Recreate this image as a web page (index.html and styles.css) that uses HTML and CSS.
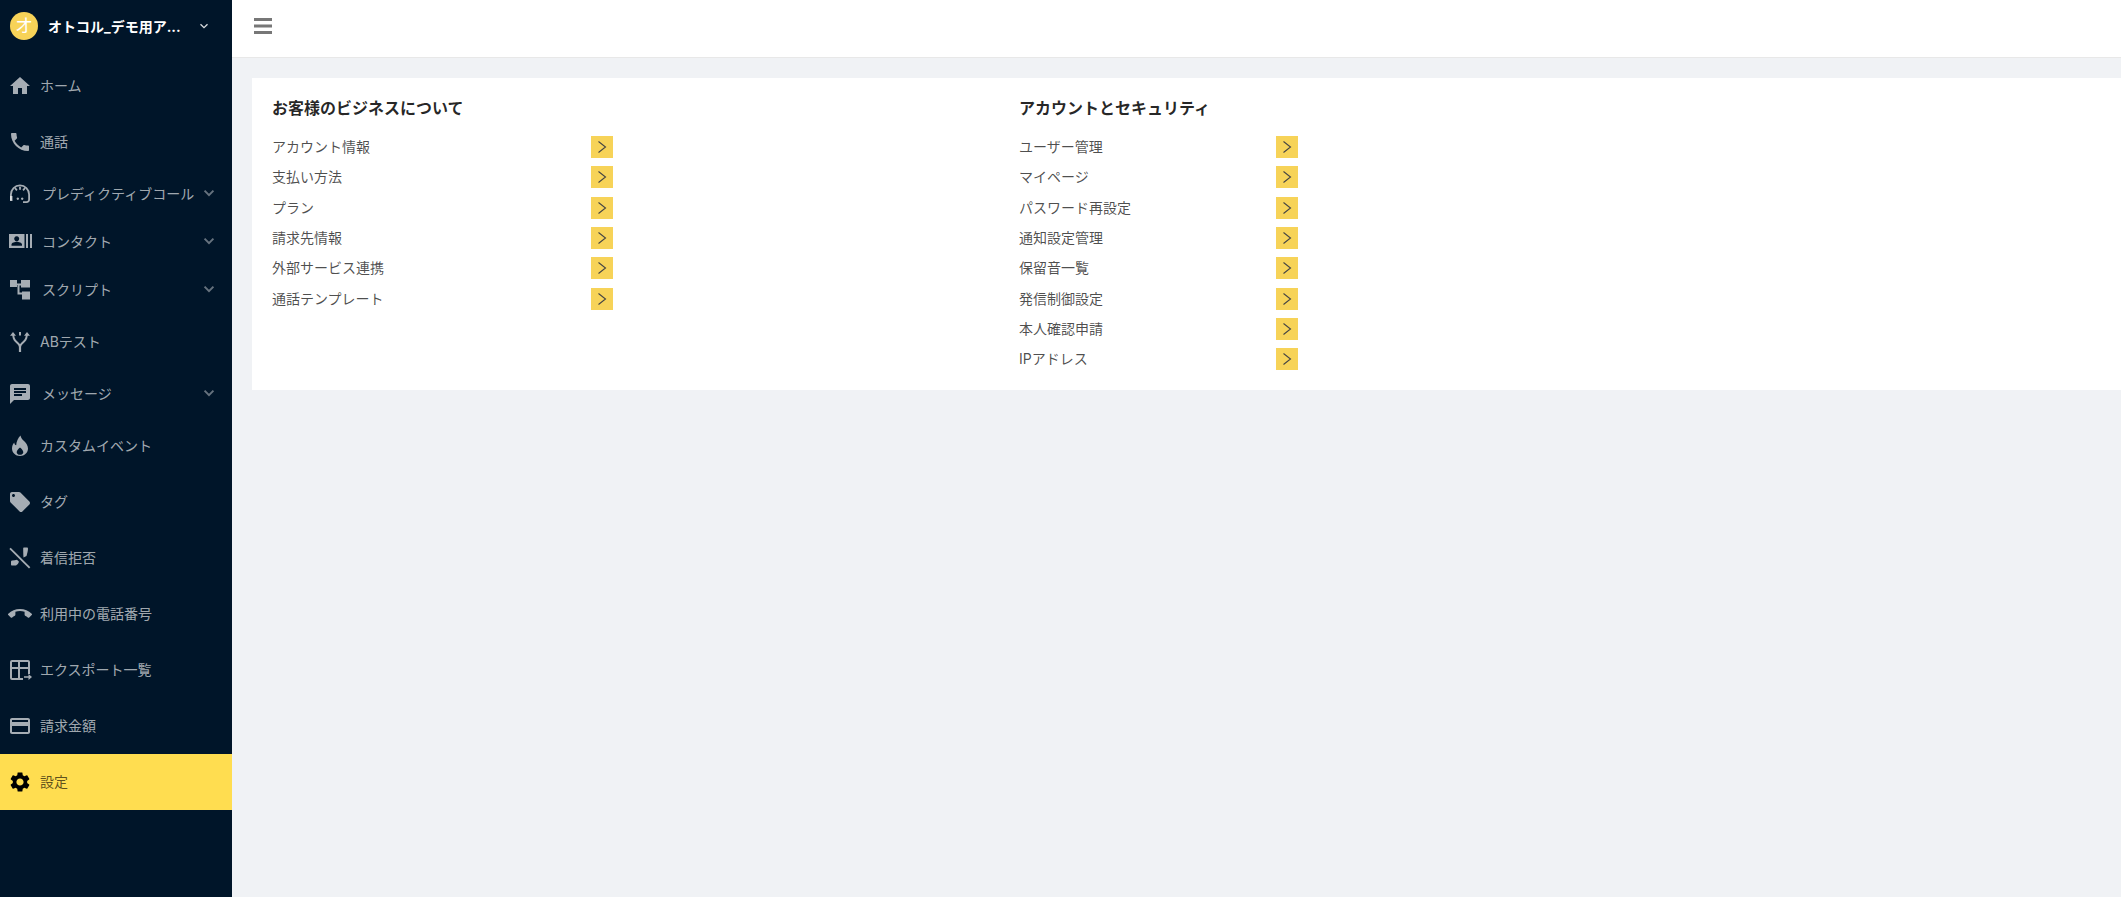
FILE: index.html
```html
<!DOCTYPE html>
<html lang="ja">
<head>
<meta charset="utf-8">
<title>設定</title>
<link rel="stylesheet" href="styles.css">
</head>
<body>
<div class="app">
  <aside class="sider">
    <div class="brand">
      <span class="avatar">オ</span>
      <span class="brand-name">オトコル_デモ用ア...</span>
      <svg class="brand-chev" viewBox="0 0 12 12"><path d="M2.500 4.200L6 7.700l3.500-3.500" /></svg>
    </div>
    <nav class="menu">
      <a class="item"><svg class="ico" viewBox="0 0 24 24"><path d="M10 20v-6h4v6h5v-8h3L12 3 2 12h3v8z"/></svg><span>ホーム</span></a>
      <a class="item"><svg class="ico" viewBox="0 0 24 24"><path d="M6.620 10.790c1.440 2.830 3.760 5.140 6.590 6.590l2.200-2.200c.27-.27.67-.36 1.020-.24 1.120.37 2.330.57 3.570.57.55 0 1 .45 1 1V20c0 .55-.45 1-1 1-9.390 0-17-7.610-17-17 0-.55.45-1 1-1h3.500c.55 0 1 .45 1 1 0 1.250.2 2.450.57 3.570.11.35.03.74-.25 1.020l-2.200 2.200z"/></svg><span>通話</span></a>
      <a class="item sub"><svg class="ico" viewBox="0 0 24 24"><path fill-rule="evenodd" d="M12 2.500a10 10 0 0 1 10 10v5c0 2-1.500 3.500-3.500 3.500H15v-1.800h3.500c1 0 1.700-.7 1.700-1.700v-5a8.200 8.200 0 0 0-16.400 0v6H2v-6a10 10 0 0 1 10-10z"/><path d="M2 14h2.500v5H2zM11.100 4.800h1.800v3h-1.800zM6.400 6.800l1.300-1.200 1.900 2.200-1.300 1.200zM16.300 5.600l1.300 1.200-1.900 2.200-1.300-1.200zM9.800 15.500a1.200 1.200 0 1 0 .01 0zM14.200 15.500a1.200 1.200 0 1 0 .01 0z"/></svg><span>プレディクティブコール</span><svg class="chev" viewBox="0 0 12 12"><path d="M2.200 4l3.800 3.800L9.800 4"/></svg></a>
      <a class="item sub"><svg class="ico" viewBox="0 0 24 24"><path d="M1 4h15.500v14H1zM8.700 6.300a2.500 2.500 0 1 0 .01 0zM3.500 15.800h10.500v-1.200c0-1.800-3.500-2.800-5.200-2.800s-5.300 1-5.300 2.800zM18 4h2v14h-2zM22 4h2v14h-2z" fill-rule="evenodd"/></svg><span>コンタクト</span><svg class="chev" viewBox="0 0 12 12"><path d="M2.200 4l3.800 3.800L9.800 4"/></svg></a>
      <a class="item sub"><svg class="ico" viewBox="0 0 24 24"><path d="M2 2h7v3.500h4V2h9v7.500h-9V7.500h-1.500v7H14v-1h8v8h-8v-5h-4.500v-9.500H9V9H2z"/></svg><span>スクリプト</span><svg class="chev" viewBox="0 0 12 12"><path d="M2.200 4l3.800 3.800L9.800 4"/></svg></a>
      <a class="item"><svg class="ico" viewBox="0 0 24 24"><path d="M5 2l3 3.800H6.200c.3 2.700 1.700 4.500 3.500 6 1 .8 1.700 1.500 2.300 2.400.6-.9 1.300-1.600 2.300-2.400 1.800-1.500 3.200-3.300 3.500-6H16L19 2l3 3.800h-2.300c-.3 3.600-2 5.800-4.100 7.500-1.600 1.300-2.500 2.400-2.500 4V22h-2.200v-4.700c0-1.600-.9-2.700-2.500-4-2.100-1.700-3.800-3.900-4.100-7.500H2z"/><path d="M11 2h2v3.500h-2z"/></svg><span>ABテスト</span></a>
      <a class="item sub"><svg class="ico" viewBox="0 0 24 24"><path d="M20 2H4c-1.100 0-1.990.9-1.990 2L2 22l4-4h14c1.100 0 2-.9 2-2V4c0-1.100-.9-2-2-2zM6 9h12v2H6V9zm8 5H6v-2h8v2zm4-6H6V6h12v2z"/></svg><span>メッセージ</span><svg class="chev" viewBox="0 0 12 12"><path d="M2.200 4l3.800 3.800L9.800 4"/></svg></a>
      <a class="item"><svg class="ico" viewBox="0 0 24 24"><path fill-rule="evenodd" d="M12.500 1.500s.7 2.800 2.700 4.700c2.600 2.400 4.800 5 4.800 8.300 0 4.100-3.600 7.500-8 7.500s-8-3.400-8-7.500c0-2.500 1-4.600 2.200-6 .2 1.600 1 2.500 2 2.800.2-3.800 1.800-7.300 4.300-9.800zM12 13.500c-1.600 1.500-3.300 2.900-3.300 4.700 0 1.500 1.400 2.600 3.300 2.600s3.300-1.100 3.300-2.600c0-1.800-1.700-3.200-3.300-4.700z"/></svg><span>カスタムイベント</span></a>
      <a class="item"><svg class="ico" viewBox="0 0 24 24"><path d="M21.410 11.580l-9-9C12.050 2.220 11.550 2 11 2H4c-1.100 0-2 .9-2 2v7c0 .55.22 1.050.59 1.420l9 9c.36.36.86.58 1.410.58.55 0 1.050-.22 1.410-.59l7-7c.37-.36.59-.86.59-1.410 0-.55-.23-1.060-.59-1.420zM5.500 7C4.670 7 4 6.330 4 5.500S4.670 4 5.500 4 7 4.670 7 5.500 6.330 7 5.500 7z"/></svg><span>タグ</span></a>
      <a class="item"><svg class="ico" viewBox="0 0 24 24"><path d="M2.700 1.700l19.600 19.600-1.300 1.300L1.400 3z"/><path d="M15.500 11.500l3-1.500c.7-2.500 1.500-5.500 1.500-7.300 0-.8-.5-1.200-1-1.200h-2.800c-.7 0-1 .4-1 1 0 2.500 0 5.300.3 9zM3 16c0-1 .5-1.500 1.300-1.500 1.700 0 3.200-.3 4.700-.8l2 2-1 2c-.5.400-1 1.300-2 1.800H4c-.6 0-1-.5-1-1z"/></svg><span>着信拒否</span></a>
      <a class="item"><svg class="ico" viewBox="0 0 24 24"><path d="M12 9c-1.600 0-3.150.25-4.600.72v3.100c0 .39-.23.74-.56.9-.98.49-1.870 1.120-2.660 1.850-.18.18-.43.28-.7.28-.28 0-.53-.11-.71-.29L.29 13.080c-.18-.17-.29-.42-.29-.7 0-.28.11-.53.29-.71C3.340 8.780 7.460 7 12 7s8.660 1.780 11.710 4.670c.18.18.29.43.29.71 0 .28-.11.53-.29.71l-2.480 2.480c-.18.18-.43.29-.71.29-.27 0-.52-.11-.7-.28-.79-.74-1.690-1.360-2.670-1.850-.33-.16-.56-.5-.56-.9v-3.100C15.150 9.250 13.600 9 12 9z"/></svg><span>利用中の電話番号</span></a>
      <a class="item"><svg class="ico" viewBox="0 0 24 24"><path fill-rule="evenodd" d="M4 2h16a2 2 0 0 1 2 2v12h-2v-5h-8v9h3v2H4a2 2 0 0 1-2-2V4a2 2 0 0 1 2-2zM4 4v5h6V4zM12 4v5h8V4zM4 11v9h6v-9z"/><path d="M16 18.200h4.500V16l3.500 3-3.500 3v-2.200H16z"/></svg><span>エクスポート一覧</span></a>
      <a class="item"><svg class="ico" viewBox="0 0 24 24"><path d="M20 4H4c-1.110 0-1.990.89-1.990 2L2 18c0 1.110.89 2 2 2h16c1.110 0 2-.89 2-2V6c0-1.110-.89-2-2-2zm0 14H4v-6h16v6zm0-10H4V6h16v2z"/></svg><span>請求金額</span></a>
      <a class="item active"><svg class="ico" viewBox="0 0 24 24"><path d="M19.140 12.940c.04-.3.06-.61.06-.94 0-.32-.02-.64-.07-.94l2.030-1.580c.18-.14.23-.41.12-.61l-1.920-3.320c-.12-.22-.37-.29-.59-.22l-2.390.96c-.5-.38-1.030-.7-1.620-.94l-.36-2.540c-.04-.24-.24-.41-.48-.41h-3.840c-.24 0-.43.17-.47.41l-.36 2.540c-.59.24-1.130.57-1.620.94l-2.390-.96c-.22-.08-.47 0-.59.22L2.740 8.870c-.12.21-.08.47.12.61l2.030 1.580c-.05.3-.09.63-.09.94s.02.64.07.94l-2.030 1.580c-.18.14-.23.41-.12.61l1.920 3.320c.12.22.37.29.59.22l2.390-.96c.5.38 1.030.7 1.620.94l.36 2.540c.05.24.24.41.48.41h3.840c.24 0 .44-.17.47-.41l.36-2.540c.59-.24 1.130-.56 1.620-.94l2.390.96c.22.08.47 0 .59-.22l1.920-3.320c.12-.22.07-.47-.12-.61l-2.010-1.580zM12 15.600c-1.980 0-3.600-1.620-3.600-3.600s1.620-3.600 3.600-3.600 3.600 1.620 3.600 3.600-1.620 3.600-3.600 3.600z"/></svg><span>設定</span></a>
    </nav>
  </aside>
  <div class="main">
    <header class="topbar">
      <svg class="burger" viewBox="0 0 18 16"><path d="M0 0h18v3H0zM0 6.500h18v3H0zM0 13h18v3H0z"/></svg>
    </header>
    <section class="card">
      <div class="col col-left">
        <h2 class="title">お客様のビジネスについて</h2>
        <div class="row"><span>アカウント情報</span><a class="go"><svg viewBox="0 0 22 22"><path d="M7.500 5.500l7 5.500-7 5.500"/></svg></a></div>
        <div class="row"><span>支払い方法</span><a class="go"><svg viewBox="0 0 22 22"><path d="M7.500 5.500l7 5.500-7 5.500"/></svg></a></div>
        <div class="row"><span>プラン</span><a class="go"><svg viewBox="0 0 22 22"><path d="M7.500 5.500l7 5.500-7 5.500"/></svg></a></div>
        <div class="row"><span>請求先情報</span><a class="go"><svg viewBox="0 0 22 22"><path d="M7.500 5.500l7 5.500-7 5.500"/></svg></a></div>
        <div class="row"><span>外部サービス連携</span><a class="go"><svg viewBox="0 0 22 22"><path d="M7.500 5.500l7 5.500-7 5.500"/></svg></a></div>
        <div class="row"><span>通話テンプレート</span><a class="go"><svg viewBox="0 0 22 22"><path d="M7.500 5.500l7 5.500-7 5.500"/></svg></a></div>
      </div>
      <div class="col col-right">
        <h2 class="title">アカウントとセキュリティ</h2>
        <div class="row"><span>ユーザー管理</span><a class="go"><svg viewBox="0 0 22 22"><path d="M7.500 5.500l7 5.500-7 5.500"/></svg></a></div>
        <div class="row"><span>マイページ</span><a class="go"><svg viewBox="0 0 22 22"><path d="M7.500 5.500l7 5.500-7 5.500"/></svg></a></div>
        <div class="row"><span>パスワード再設定</span><a class="go"><svg viewBox="0 0 22 22"><path d="M7.500 5.500l7 5.500-7 5.500"/></svg></a></div>
        <div class="row"><span>通知設定管理</span><a class="go"><svg viewBox="0 0 22 22"><path d="M7.500 5.500l7 5.500-7 5.500"/></svg></a></div>
        <div class="row"><span>保留音一覧</span><a class="go"><svg viewBox="0 0 22 22"><path d="M7.500 5.500l7 5.500-7 5.500"/></svg></a></div>
        <div class="row"><span>発信制御設定</span><a class="go"><svg viewBox="0 0 22 22"><path d="M7.500 5.500l7 5.500-7 5.500"/></svg></a></div>
        <div class="row"><span>本人確認申請</span><a class="go"><svg viewBox="0 0 22 22"><path d="M7.500 5.500l7 5.500-7 5.500"/></svg></a></div>
        <div class="row"><span>IPアドレス</span><a class="go"><svg viewBox="0 0 22 22"><path d="M7.500 5.500l7 5.500-7 5.500"/></svg></a></div>
      </div>
    </section>
  </div>
</div>
</body>
</html>
```
FILE: styles.css
```css
* { box-sizing: border-box; }
html, body { margin: 0; height: 100%; }
body {
  font-family: Inter, "Noto Sans CJK JP", sans-serif;
  font-size: 14px;
  background: #f0f2f5;
  overflow: hidden;
}
.app { display: flex; height: 897px; }
.sider { width: 232px; flex: none; background: #001529; display: flex; flex-direction: column; }
.brand { height: 57.500px; padding: 0 0 5px 10px; display: flex; align-items: center; flex: none; }
.avatar {
  width: 28px; height: 28px; border-radius: 50%; background: #f7d358; color: #fff;
  font-size: 18px; line-height: 28px; display: flex; align-items: center; justify-content: center; flex: none;
}
.brand-name {
  width: 144px; margin-left: 10px; color: #fff; font-weight: 700; font-size: 14px;
  white-space: nowrap;
}
.brand-chev { width: 12px; height: 12px; margin-left: 6px; fill: none; stroke: rgba(255,255,255,.85); stroke-width: 1.300; }
.menu { display: flex; flex-direction: column; position: relative; }
.item {
  height: 56px; display: flex; align-items: center; padding-left: 8px; gap: 8px;
  color: rgba(255,255,255,.65); font-size: 14px; white-space: nowrap;
}
.item span { padding-bottom: 2px; }
.item.sub { height: 48px; gap: 10px; position: relative; }
.item.active { background: #ffdd50; color: rgba(0,0,0,.65); }
.ico { width: 24px; height: 24px; flex: none; fill: rgba(255,255,255,.65); }
.active .ico { fill: #000; }
.chev { width: 14px; height: 14px; position: absolute; left: 202px; top: 16px; fill: none; stroke: rgba(255,255,255,.4); stroke-width: 1.700; }
.main { flex: 1; min-width: 0; display: flex; flex-direction: column; }
.topbar { height: 58px; background: #fff; border-bottom: 1px solid #e8e8e8; padding: 18px 0 0 22px; flex: none; }
.burger { display: block; width: 18px; height: 16px; fill: #777; }
.card { margin: 20px 0 0 20px; height: 312px; background: #fff; display: flex; padding: 18.200px 0 0 20px; }
.col { width: 747px; flex: none; }
.title { margin: 0 0 16px; height: 24px; font-size: 16px; line-height: 24px; font-weight: 700; color: rgba(0,0,0,.85); }
.row { display: grid; height: 22px; margin-bottom: 8.300px; align-items: center; color: rgba(0,0,0,.7); font-size: 14px; }
.row span { padding-bottom: 2px; }
.col-left .row { grid-template-columns: 319px 22px; }
.col-right .row { grid-template-columns: 257px 22px; }
.go { display: block; width: 22px; height: 22px; background: #f7d358; }
.go svg { display: block; width: 22px; height: 22px; fill: none; stroke: #444; stroke-width: 1.100; }
```
